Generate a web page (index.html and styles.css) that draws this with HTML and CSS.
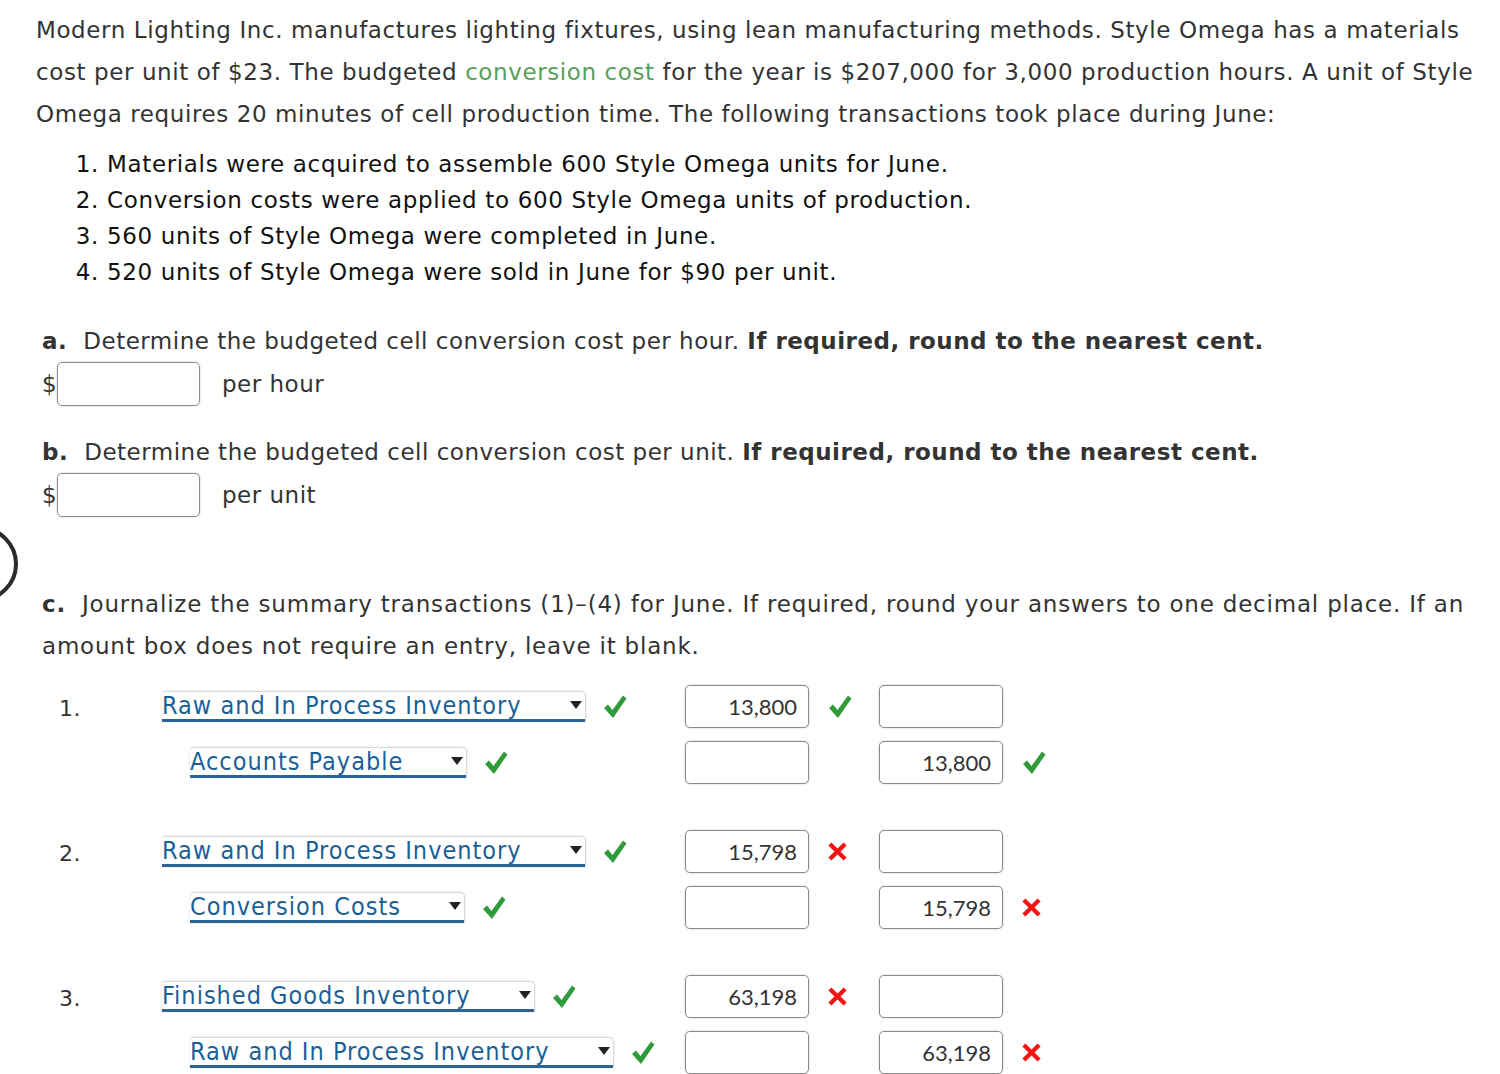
FILE: index.html
```html
<!DOCTYPE html>
<html>
<head>
<meta charset="utf-8">
<link rel="stylesheet" href="styles.css">
</head>
<body>
<div class="ring"></div>
<div class="page">
  <p class="intro">Modern Lighting Inc. manufactures lighting fixtures, using lean manufacturing methods. Style Omega has a materials cost per unit of $23. The budgeted <span class="term">conversion cost</span> for the year is $207,000 for 3,000 production hours. A unit of Style Omega requires 20 minutes of cell production time. The following transactions took place during June:</p>
  <ol class="steps">
    <li>Materials were acquired to assemble 600 Style Omega units for June.</li>
    <li>Conversion costs were applied to 600 Style Omega units of production.</li>
    <li>560 units of Style Omega were completed in June.</li>
    <li>520 units of Style Omega were sold in June for $90 per unit.</li>
  </ol>

  <div class="part part-a">
    <p class="q"><b class="lbl">a.</b>Determine the budgeted cell conversion cost per hour. <b>If required, round to the nearest cent.</b></p>
    <div class="answer"><span class="cur">$</span><span class="box"></span><span class="unit">per hour</span></div>
  </div>

  <div class="part part-b">
    <p class="q"><b class="lbl">b.</b>Determine the budgeted cell conversion cost per unit. <b>If required, round to the nearest cent.</b></p>
    <div class="answer"><span class="cur">$</span><span class="box"></span><span class="unit">per unit</span></div>
  </div>

  <div class="part part-c">
    <p class="q qc"><b class="lbl">c.</b>Journalize the summary transactions (1)&ndash;(4) for June. If required, round your answers to one decimal place. If an amount box does not require an entry, leave it blank.</p>
  </div>

  <div class="journal">
    <div class="entry">
      <div class="jline">
        <span class="num">1.</span>
        <span class="acct"><span class="sel">Raw and In Process Inventory<i class="arr"></i></span><svg class="ok" viewBox="0 0 24 26"><path d="M1 14 L5 10.5 L9.5 16 L20 1.5 L23.5 4.5 L10 24 Z"/></svg></span>
        <span class="amt"><span class="num-in">13,800</span><svg class="ok" viewBox="0 0 24 26"><path d="M1 14 L5 10.5 L9.5 16 L20 1.5 L23.5 4.5 L10 24 Z"/></svg></span>
        <span class="amt"><span class="num-in"></span></span>
      </div>
      <div class="jline">
        <span class="num"></span>
        <span class="acct credit"><span class="sel">Accounts Payable<i class="arr"></i></span><svg class="ok" viewBox="0 0 24 26"><path d="M1 14 L5 10.5 L9.5 16 L20 1.5 L23.5 4.5 L10 24 Z"/></svg></span>
        <span class="amt"><span class="num-in"></span></span>
        <span class="amt"><span class="num-in">13,800</span><svg class="ok" viewBox="0 0 24 26"><path d="M1 14 L5 10.5 L9.5 16 L20 1.5 L23.5 4.5 L10 24 Z"/></svg></span>
      </div>
    </div>

    <div class="entry">
      <div class="jline">
        <span class="num">2.</span>
        <span class="acct"><span class="sel">Raw and In Process Inventory<i class="arr"></i></span><svg class="ok" viewBox="0 0 24 26"><path d="M1 14 L5 10.5 L9.5 16 L20 1.5 L23.5 4.5 L10 24 Z"/></svg></span>
        <span class="amt"><span class="num-in">15,798</span><svg class="bad" viewBox="0 0 20 20"><path d="M2 2 L18 18 M18 2 L2 18"/></svg></span>
        <span class="amt"><span class="num-in"></span></span>
      </div>
      <div class="jline">
        <span class="num"></span>
        <span class="acct credit"><span class="sel">Conversion Costs<i class="arr"></i></span><svg class="ok" viewBox="0 0 24 26"><path d="M1 14 L5 10.5 L9.5 16 L20 1.5 L23.5 4.5 L10 24 Z"/></svg></span>
        <span class="amt"><span class="num-in"></span></span>
        <span class="amt"><span class="num-in">15,798</span><svg class="bad" viewBox="0 0 20 20"><path d="M2 2 L18 18 M18 2 L2 18"/></svg></span>
      </div>
    </div>

    <div class="entry">
      <div class="jline">
        <span class="num">3.</span>
        <span class="acct"><span class="sel">Finished Goods Inventory<i class="arr"></i></span><svg class="ok" viewBox="0 0 24 26"><path d="M1 14 L5 10.5 L9.5 16 L20 1.5 L23.5 4.5 L10 24 Z"/></svg></span>
        <span class="amt"><span class="num-in">63,198</span><svg class="bad" viewBox="0 0 20 20"><path d="M2 2 L18 18 M18 2 L2 18"/></svg></span>
        <span class="amt"><span class="num-in"></span></span>
      </div>
      <div class="jline">
        <span class="num"></span>
        <span class="acct credit"><span class="sel">Raw and In Process Inventory<i class="arr"></i></span><svg class="ok" viewBox="0 0 24 26"><path d="M1 14 L5 10.5 L9.5 16 L20 1.5 L23.5 4.5 L10 24 Z"/></svg></span>
        <span class="amt"><span class="num-in"></span></span>
        <span class="amt"><span class="num-in">63,198</span><svg class="bad" viewBox="0 0 20 20"><path d="M2 2 L18 18 M18 2 L2 18"/></svg></span>
      </div>
    </div>
  </div>
</div>
</body>
</html>
```

FILE: styles.css
```css
html, body {
  margin: 0;
  padding: 0;
  background: #fff;
}
body {
  font-family: "DejaVu Sans", Verdana, sans-serif;
  font-size: 23px;
  letter-spacing: 0.5px;
  color: #333;
  overflow: hidden;
  height: 1074px;
  position: relative;
}
.ring {
  position: absolute;
  left: -58px;
  top: 526px;
  width: 68px;
  height: 68px;
  border: 4px solid #2b2b2b;
  border-radius: 50%;
}
.page {
  padding: 9px 10px 0 36px;
}
p { margin: 0; }
.intro {
  line-height: 42px;
  letter-spacing: 0.6px;
  width: 1450px;
}
.term { color: #56a05a; }
.steps {
  margin: 11px 0 0 0;
  padding-left: 71px;
  line-height: 36px;
  letter-spacing: 0.65px;
  color: #111;
}
.part { padding-left: 6px; }
.part-a { margin-top: 30px; }
.part-b { margin-top: 25px; }
.part-c { margin-top: 66px; }
.q { line-height: 42px; }
.qc { letter-spacing: 0.8px; }
.q b { color: #333; }
.lbl { margin-right: 16px; }
.answer {
  display: flex;
  align-items: center;
  height: 44px;
}
.cur { width: 15px; }
.box {
  width: 141px;
  height: 42px;
  border: 1px solid #8c8c8c;
  border-radius: 5px;
  box-shadow: 0 0 2px rgba(0,0,0,0.25);
}
.unit { margin-left: 22px; }

.journal {
  margin-top: 18px;
  padding-left: 23px;
  display: flex;
  flex-direction: column;
  gap: 46px;
}
.entry {
  display: flex;
  flex-direction: column;
  gap: 13px;
}
.jline {
  display: grid;
  grid-template-columns: 103px 523px 194px 200px;
  height: 43px;
  align-items: center;
}
.num {
  font-size: 22px;
  letter-spacing: 0.5px;
  color: #333;
  padding-top: 4px;
}
.acct {
  display: flex;
  align-items: center;
  gap: 18px;
}
.acct.credit { padding-left: 28px; }
.sel {
  display: inline-flex;
  align-items: center;
  font-family: "DejaVu Sans Condensed", "DejaVu Sans", sans-serif;
  font-stretch: condensed;
  font-size: 25px;
  letter-spacing: 1px;
  line-height: 27px;
  color: #1b5f97;
  background: #fff;
  border-radius: 4px 4px 0 0;
  box-shadow: 0 -1px 2px rgba(0,0,0,0.15), 1px 0 2px rgba(0,0,0,0.15);
  border-bottom: 3px solid #2c6593;
  padding-right: 2px;
}
.arr {
  margin-left: 48px;
  width: 0;
  height: 0;
  border-left: 6px solid transparent;
  border-right: 6px solid transparent;
  border-top: 8px solid #222;
  margin-right: 1px;
}
.ok {
  width: 24px;
  height: 26px;
  fill: #2f9b3b;
}
.bad {
  width: 19px;
  height: 19px;
  stroke: #f01414;
  stroke-width: 4.5;
  fill: none;
}
.amt {
  display: flex;
  align-items: center;
  gap: 19px;
}
.num-in {
  box-sizing: border-box;
  width: 124px;
  height: 43px;
  border: 1px solid #8a8a8a;
  border-radius: 5px;
  box-shadow: 0 0 2px rgba(0,0,0,0.25);
  font-family: Lato, "Open Sans", sans-serif;
  font-size: 22px;
  letter-spacing: 0;
  color: #333;
  text-align: right;
  padding: 0 11px;
  line-height: 41px;
}
```
